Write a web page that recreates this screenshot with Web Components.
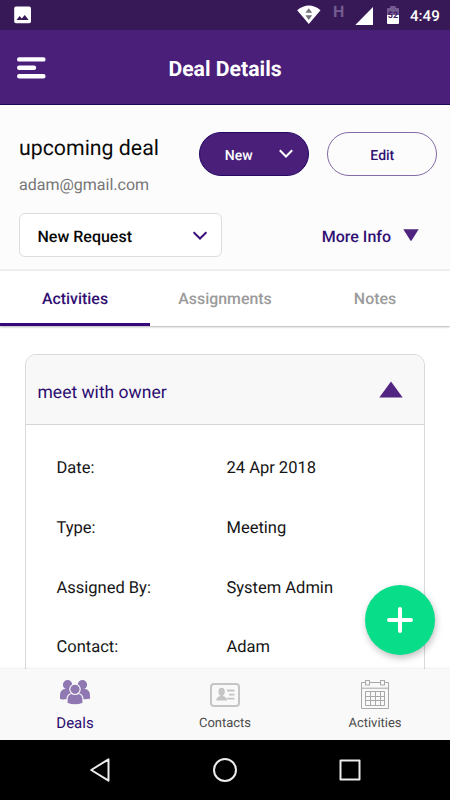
<!DOCTYPE html>
<html lang="en">
<head>
<meta charset="utf-8">
<title>Deal Details</title>
<style>
html,body{margin:0;padding:0;background:#fff}
body{width:450px;height:800px;overflow:hidden;font-family:Roboto,"Liberation Sans",sans-serif;color:#111;text-rendering:geometricPrecision}
</style>
</head>
<body>
<deal-app></deal-app>
<script>
const define = (name, html) => customElements.define(name, class extends HTMLElement {
  constructor() {
    super();
    const t = document.createElement('template');
    t.innerHTML = html;
    this.attachShadow({mode: 'open'}).append(t.content.cloneNode(true));
  }
});

define('status-bar', `
<style>
:host{display:flex;height:30px;flex:none;background:#371957;color:#fff;align-items:flex-start}
svg{display:block;flex:none}
.time{font-size:15.1px;font-weight:500;line-height:18px;width:30px;margin:7px 10px 0 10px;white-space:nowrap}
.h{font-size:16px;font-weight:700;line-height:16px;color:#745c91;width:12px;margin:4px 0 0 12px}
.grow{flex:1}
.bat{position:relative;width:14px;height:19px;margin:6px 0 0 12px}
.bat span{position:absolute;left:1px;top:5px;width:12px;text-align:center;font-size:9px;line-height:10px;font-weight:700;color:#401b66}
</style>
<svg width="18" height="18" style="margin:6px 0 0 14px"><rect x=".2" y=".6" width="16.8" height="16.6" rx="1.8" fill="#fff"/><path d="M2.500 14 5.600 10l2.200 2.500L10.800 9l3.800 5z" fill="#371957"/></svg>
<div class="grow"></div>
<svg width="24" height="19" style="margin:5px 0 0"><path d="M.2 5.200Q12-4 23.500 5.200L11.800 19z" fill="#fff"/><path d="M11.800 3.200 15.200 7.800H8.400zM8.400 10.300h6.800l-3.400 4.600z" fill="#77737b"/></svg>
<div class="h">H</div>
<svg width="19" height="19" style="margin:6px 0 0 10px"><path d="M.3 19H18V1z" fill="#fff"/></svg>
<div class="bat"><svg width="14" height="19"><path d="M4.200 0h5.500v2H12q1 0 1 1v7H1V3q0-1 1-1h2.200z" fill="#745c91"/><path d="M1 9h12v8q0 1-1 1H2q-1 0-1-1z" fill="#fff"/></svg><span>52</span></div>
<div class="time">4:49</div>`);

define('app-header', `
<style>
:host{display:grid;grid-template-columns:60px 1fr 60px;height:75px;flex:none;box-sizing:border-box;background:#491f7a;border-bottom:1px solid #1b0556;align-items:center;color:#fff}
h1{margin:5px 0 0;text-align:center;font-size:21.2px;line-height:26px;font-weight:700;white-space:nowrap}
svg{display:block;margin:1px 0 0 17px}
</style>
<svg width="29" height="22" fill="none" stroke="#fff" stroke-width="4.4" stroke-linecap="round"><path d="M2.200 2.400h24.200M2.200 10.800H17M2.200 19.200h24.200"/></svg>
<h1><slot></slot></h1>`);

define('pill-button', `
<style>
:host{display:flex;box-sizing:border-box;width:110px;height:44px;border-radius:22px;align-items:center;justify-content:center;border:1px solid #846aa6;color:#311073;font-size:14px;font-weight:500}
:host([filled]){background:#491f7a;border-color:#250864;color:#fff;justify-content:flex-start;padding-left:25px;gap:26px}
span{margin-top:3px}
svg{display:none}:host([filled]) svg{display:block}
</style>
<span><slot></slot></span><svg width="14" height="10" fill="none" stroke="#fff" stroke-width="2"><path d="M.8 1.200 7 7.500l6.200-6.300"/></svg>`);

define('select-box', `
<style>
:host{display:flex;box-sizing:border-box;width:203px;height:44px;border:1px solid #ddd;border-radius:6px;background:#fff;align-items:center;justify-content:space-between;padding:2px 14px 0 17.500px;font-size:16px;font-weight:500;color:#080808}
svg{display:block}
</style>
<span><slot></slot></span><svg width="14" height="10" style="margin-top:-1px" fill="none" stroke="#3b117a" stroke-width="2"><path d="M.6 1.200 7 7.500l6.400-6.300"/></svg>`);

define('deal-summary', `
<style>
:host{display:block;height:166px;flex:none;box-sizing:border-box;background:#fcfcfc;border-bottom:2px solid #f0f0f0;padding:27px 12.700px 0 19px}
.row{display:flex;justify-content:space-between}
.name{font-size:21.300px;line-height:30px;margin-top:2px;color:#0a0a0a;white-space:nowrap}
.mail{font-size:16px;line-height:22px;margin-top:10px;color:#757575}
.btns{display:flex;gap:18.500px}
.second{margin-top:17px;align-items:center}
.more{display:flex;align-items:center;gap:12px;font-size:16px;font-weight:500;color:#311073;margin-right:18.300px}
.more span{margin-top:2px}
svg{display:block}
</style>
<div class="row"><div><div class="name">upcoming deal</div><div class="mail">adam@gmail.com</div></div>
<div class="btns"><pill-button filled>New</pill-button><pill-button>Edit</pill-button></div></div>
<div class="row second"><select-box>New Request</select-box><div class="more"><span>More Info</span><svg width="16" height="12"><path d="M.3.3h15.400L8.600 11.600q-.6.8-1.200 0z" fill="#4f2480"/></svg></div></div>`);

define('tab-item', `
<style>
:host{display:flex;flex:1;box-sizing:border-box;justify-content:center;align-items:center;padding-top:3px;font-size:15.900px;font-weight:500;color:#9b9b9b;border-bottom:3px solid transparent}
:host([active]){color:#311073;border-color:#35087c}
</style><slot></slot>`);

define('tab-bar', `
<style>
:host{display:flex;height:55px;flex:none;background:#fff;box-shadow:0 1px 2px rgba(0,0,0,.3);position:relative}
</style><slot></slot>`);

define('detail-row', `
<style>
:host{display:grid;grid-template-columns:170px 1fr;height:59.700px;align-items:center;font-size:16.500px;color:#151515;white-space:nowrap}
</style><span><slot name="label"></slot></span><span><slot></slot></span>`);

define('activity-card', `
<style>
:host{display:block;box-sizing:border-box;margin:28px 25px 0;height:400px;border:1px solid #d9d9d9;border-radius:11px 11px 0 0;background:#fff;overflow:hidden}
header{display:flex;box-sizing:border-box;height:70px;background:#f8f8f8;border-bottom:1px solid #d4d4d4;align-items:center;justify-content:space-between;padding:7px 21px 0 11.500px;font-size:17.500px;color:#2b0b70}
.body{padding:14px 30px 0 30.500px}
svg{display:block;margin-top:-7px}
</style>
<header><span><slot name="title"></slot></span><svg width="24" height="17"><path d="M12 .5 23.700 16.500H.3z" fill="#522582"/></svg></header>
<div class="body"><slot></slot></div>`);

define('add-button', `
<style>
:host{display:flex;position:absolute;right:15px;bottom:145px;width:70px;height:70px;border-radius:50%;background:#08dd8a;align-items:center;justify-content:center;box-shadow:1px 3px 7px rgba(0,0,0,.25)}
</style><svg width="26" height="26" stroke="#fff" stroke-width="4" stroke-linecap="round"><path d="M13 2v22M2 13h22"/></svg>`);

define('nav-item', `
<style>
:host{display:flex;flex:1;flex-direction:column;align-items:center;font-size:13px;color:#4b4b4b}
.i{height:44px;display:flex;align-items:flex-start;padding-top:9px;box-sizing:border-box}
.t{line-height:22px}
:host([active]) .t{font-size:15px;color:#2b0b70;margin-top:-1px}
</style><div class="i"><slot name="icon"></slot></div><div class="t"><slot></slot></div>`);

define('bottom-nav', `
<style>
:host{display:flex;height:71px;flex:none;background:#f9f9f9;position:relative;box-shadow:0 -1px 2px rgba(0,0,0,.07)}
svg{display:block}
</style>
<nav-item active><svg slot="icon" width="32" height="28" viewBox="0 0 32 28"><g fill="#9078b2"><circle cx="8.600" cy="6.800" r="4.700"/><circle cx="23.400" cy="6.800" r="4.700"/><path d="M1 21v-3.500q0-6 5-6.500h5q3 0 4 3v7.200H6Q2.500 21.800 1 21zM31 21v-3.500q0-6-5-6.500h-5q-3 0-4 3v7.200h9q3.500 0 5-.7z"/></g><g fill="#9078b2" stroke="#f9f9f9" stroke-width="1.200"><path d="M8 25.400v-3.600q0-6.300 5.600-6.300h4.800q5.600 0 5.600 6.300v3.600Q16 28.500 8 25.400z"/><circle cx="16" cy="11.300" r="5.200"/></g></svg>Deals</nav-item>
<nav-item><svg slot="icon" width="30" height="31" viewBox="0 0 30 31" fill="none" stroke="#c5c5c5"><rect x="1" y="6" width="28" height="22" rx="3" stroke-width="2"/><path d="M17 12.500h7.500M19 16.600h5.500M17 20.700h7.500" stroke-width="1.800"/><g fill="#c5c5c5" stroke="none"><ellipse cx="11.600" cy="13.800" rx="3.200" ry="4"/><path d="M6.200 22.500q0-3.600 4-4.600v-2h2.800v2q4 1 4 4.600z"/></g></svg>Contacts</nav-item>
<nav-item><svg slot="icon" width="28" height="31" viewBox="0 0 28 31" fill="none" stroke="#a9a9a9"><path d="M5 4.500H.5v26h27v-26H23M9 4.500h10M.5 10.200h27"/><rect x="4.500" y="2.500" width="4" height="4.500"/><rect x="19.500" y="2.500" width="4" height="4.500"/><path d="M4.500 13.500h19v14h-19zM9.500 13.500v14M14.500 13.500v14M19.500 13.500v14M4.500 18.500h19M4.500 22.500h19"/></svg>Activities</nav-item>`);

define('system-nav', `
<style>
:host{display:flex;height:60px;flex:none;background:#000;align-items:center;justify-content:center;gap:101px;position:relative}
svg{display:block;fill:none;stroke:#ececec;stroke-width:2;stroke-linejoin:round}
</style>
<svg width="24" height="26"><path d="M20.500 2.300v21.400L3.200 13z" /></svg>
<svg width="24" height="26"><circle cx="12" cy="13" r="11"/></svg>
<svg width="24" height="26"><rect x="2.500" y="3.500" width="19" height="19"/></svg>`);

define('deal-app', `
<style>
:host{display:flex;flex-direction:column;width:450px;height:800px;position:relative;overflow:hidden;background:#fff}
main{flex:1;min-height:0;overflow:hidden}
</style>
<status-bar></status-bar>
<app-header>Deal Details</app-header>
<deal-summary></deal-summary>
<tab-bar><tab-item active>Activities</tab-item><tab-item>Assignments</tab-item><tab-item>Notes</tab-item></tab-bar>
<main><activity-card><span slot="title">meet with owner</span>
<detail-row><span slot="label">Date:</span>24 Apr 2018</detail-row>
<detail-row><span slot="label">Type:</span>Meeting</detail-row>
<detail-row><span slot="label">Assigned By:</span>System Admin</detail-row>
<detail-row><span slot="label">Contact:</span>Adam</detail-row>
</activity-card></main>
<add-button></add-button>
<bottom-nav></bottom-nav>
<system-nav></system-nav>`);
</script>
</body>
</html>
